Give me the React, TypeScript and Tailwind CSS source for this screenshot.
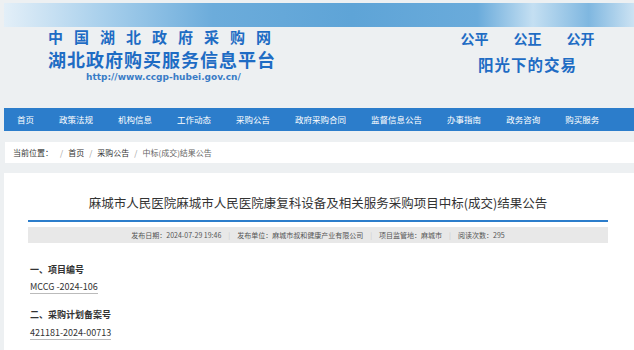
import { ReactElement } from 'react';

const navItems = [
  '首页',
  '政策法规',
  '机构信息',
  '工作动态',
  '采购公告',
  '政府采购合同',
  '监督信息公告',
  '办事指南',
  '政务咨询',
  '购买服务',
];

function Sep(): ReactElement {
  return <span className="mx-[7px] text-[#c8c8c8]">|</span>;
}

export default function App(): ReactElement {
  return (
    <div className="h-screen overflow-hidden bg-[#edf0f2] font-['Noto_Sans_CJK_SC',sans-serif]">
      <div className="w-[700px] pl-[4px] pt-[3px]">
        {/* sky banner */}
        <div className="h-[24px] bg-[linear-gradient(90deg,#e3eff8_0%,#a9d0ec_14%,#6cacdb_30%,#5ea4d7_50%,#6aabdb_68%,#c4dff2_76%,#7fb7e0_84%,#e9f3fa_93%,#f4f8fb_100%)]" />

        {/* header texts */}
        <div className="flex h-[81px] whitespace-nowrap pl-[44px] font-bold text-[#1e6cc4]">
          <div className="w-[231px] shrink-0">
            <div className="mt-[1px] text-[15px] leading-[18px] tracking-[11px]">中国湖北政府采购网</div>
            <div className="mt-[3px] text-[18px] leading-[20px] tracking-[1px]">湖北政府购买服务信息平台</div>
            <div className="mt-[3px] pl-[38px] font-['DejaVu_Sans',sans-serif] text-[9px] font-bold leading-[10px] text-[#3a7cc6]">
              http://www.ccgp-hubei.gov.cn/
            </div>
          </div>
          <div className="ml-[183px] w-[131px] shrink-0 text-center">
            <div className="mt-[3px] flex justify-center gap-[25px] text-[14px] leading-[16px]">
              <span>公平</span>
              <span>公正</span>
              <span>公开</span>
            </div>
            <div className="mt-[9px] text-[15.5px] leading-[18px] tracking-[1px]">阳光下的交易</div>
          </div>
        </div>

        {/* nav */}
        <div className="flex h-[23px] items-center whitespace-nowrap bg-[#2c7dcb] text-[8.5px] text-white">
          {navItems.map((item) => (
            <span key={item} className="px-[12.5px] leading-none first:pl-[13px]">
              {item}
            </span>
          ))}
        </div>

        {/* breadcrumb */}
        <div className="mt-[11px] ml-[1px] flex h-[21px] items-center bg-white pl-[8px] text-[8px] text-[#333]">
          <span>当前位置：</span>
          <span className="mx-[5px] ml-[7px] text-[#999]">/</span>
          <span>首页</span>
          <span className="mx-[5px] text-[#999]">/</span>
          <span>采购公告</span>
          <span className="mx-[5px] text-[#999]">/</span>
          <span className="text-[#666]">中标(成交)结果公告</span>
        </div>

        {/* content */}
        <div className="mt-[10px] h-[177px] bg-white pl-[24px] pr-[92px]">
          <h1 className="whitespace-nowrap pt-[21px] text-center text-[12.5px] leading-[18px] text-[#333]">
            麻城市人民医院麻城市人民医院康复科设备及相关服务采购项目中标(成交)结果公告
          </h1>
          <div className="mt-[8px] h-[2px] bg-[#2c7dcb]" />
          <div className="mt-[5px] flex h-[16px] items-center justify-center whitespace-nowrap bg-[#e8e8e8] text-[7px] text-[#555]">
            <span>发布日期：2024-07-29 19:46</span>
            <Sep />
            <span>发布单位：麻城市叔和健康产业有限公司</span>
            <Sep />
            <span>项目监管地：麻城市</span>
            <Sep />
            <span>阅读次数：295</span>
          </div>

          <div className="pl-[2px] text-[9px] text-[#333]">
            <div className="mt-[21px] font-bold leading-[12px]">一、项目编号</div>
            <div className="mt-[5px] leading-[12px]">
              <span className="border-b border-[#bbb]">MCCG -2024-106</span>
            </div>
            <div className="mt-[16px] font-bold leading-[12px]">二、采购计划备案号</div>
            <div className="mt-[6px] leading-[12px]">
              <span className="border-b border-[#bbb]">421181-2024-00713</span>
            </div>
          </div>
        </div>
      </div>
    </div>
  );
}
